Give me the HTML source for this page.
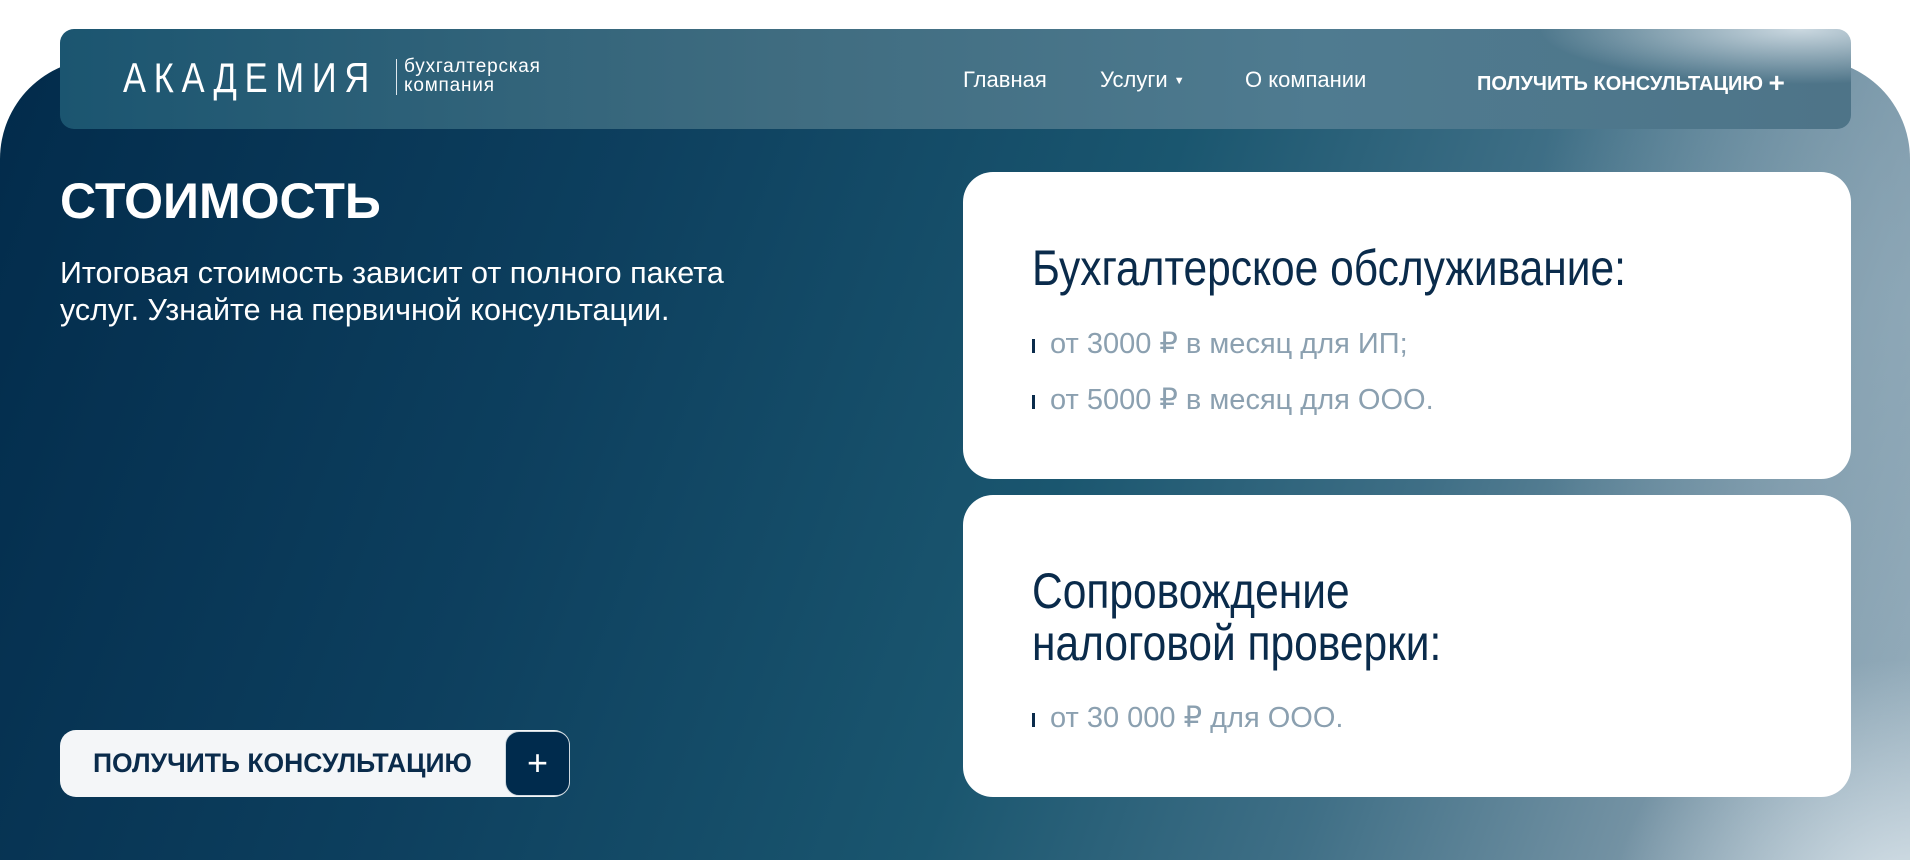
<!DOCTYPE html>
<html><head><meta charset="utf-8"><style>
*{margin:0;padding:0;box-sizing:border-box}
body{width:1910px;height:860px;overflow:hidden;background:#fff;font-family:"Liberation Sans","DejaVu Sans",sans-serif;position:relative}
.bg{position:absolute;left:0;top:59px;width:1910px;height:801px;border-radius:100px 100px 0 0;
background:
radial-gradient(ellipse 300px 260px at 1910px 860px,rgba(225,234,240,0.9),rgba(225,234,240,0) 100%),
radial-gradient(ellipse 380px 600px at 1910px 250px,rgba(150,175,190,0.6),rgba(150,175,190,0) 100%),
linear-gradient(110deg,#022b4b 0%,#0d3f5e 30%,#1a566f 55%,#3f6f86 72%,#7895a6 88%,#98afbd 100%);}
.hdr{position:absolute;left:60px;top:29px;width:1791px;height:100px;border-radius:14px;
background:radial-gradient(ellipse 260px 55px at 1740px 0,rgba(225,234,240,0.85),rgba(225,234,240,0) 100%),
linear-gradient(90deg,#1b5570 0%,#3f6c80 40%,#4f7b90 70%,#4e7488 100%);}
.logo{position:absolute;left:123px;top:54px;color:#fff;font-size:42px;letter-spacing:9.5px;font-weight:300;transform:scaleX(0.82);transform-origin:left}
.div{position:absolute;left:396px;top:59px;width:1px;height:36px;background:#dfe8ee}
.sub{position:absolute;left:404px;top:57px;color:#fff;font-size:19px;line-height:19px;letter-spacing:0.8px}
.nav{position:absolute;top:67px;color:#fff;font-size:22px}
.navb{position:absolute;top:67px;left:1477px;color:#fff;font-size:20px;font-weight:bold}
h1{position:absolute;left:60px;top:172px;color:#fff;font-size:50px;font-weight:bold}
.p{position:absolute;left:60px;top:255px;color:#fff;font-size:30.5px;line-height:37px;width:740px}
.card{position:absolute;left:963px;width:888px;background:#fff;border-radius:30px}
.ct{position:absolute;left:69px;color:#0a2b4b;font-family:"Liberation Sans Narrow","Liberation Sans",sans-serif;font-size:50px;line-height:52px;transform:scaleX(0.85);transform-origin:left}
.li{position:absolute;left:87px;color:#8ba0b0;font-size:29px;}
.li:before{content:"";position:absolute;left:-18px;top:13px;width:3px;height:14px;background:#0a2b4b}
.btn{position:absolute;left:60px;top:730px;width:510px;height:67px;background:#f4f6f8;border-radius:16px}
.btn span{position:absolute;left:33px;top:18px;color:#0a2b4b;font-size:26.5px;font-weight:bold}
.plus{position:absolute;right:0;top:1px;width:65px;height:65px;background:#002b4d;border:1px solid #cfd9e0;border-radius:14px;color:#fff;font-size:36px;text-align:center;line-height:62px}
</style></head><body>
<div class="bg"></div>
<div class="hdr"></div>
<div class="logo">АКАДЕМИЯ</div>
<div class="div"></div>
<div class="sub">бухгалтерская<br>компания</div>
<div class="nav" style="left:963px">Главная</div>
<div class="nav" style="left:1100px">Услуги <span style="font-size:11px;vertical-align:middle">▼</span></div>
<div class="nav" style="left:1245px">О компании</div>
<div class="navb">ПОЛУЧИТЬ КОНСУЛЬТАЦИЮ <span style="font-size:28px;vertical-align:-2px">+</span></div>
<h1>СТОИМОСТЬ</h1>
<div class="p">Итоговая стоимость зависит от полного пакета услуг. Узнайте на первичной консультации.</div>
<div class="card" style="top:172px;height:307px">
<div class="ct" style="top:70px">Бухгалтерское обслуживание:</div>
<div class="li" style="top:154px">от 3000 ₽ в месяц для ИП;</div>
<div class="li" style="top:210px">от 5000 ₽ в месяц для ООО.</div>
</div>
<div class="card" style="top:495px;height:302px">
<div class="ct" style="top:70px">Сопровождение<br>налоговой проверки:</div>
<div class="li" style="top:205px">от 30 000 ₽ для ООО.</div>
</div>
<div class="btn"><span>ПОЛУЧИТЬ КОНСУЛЬТАЦИЮ</span><div class="plus">+</div></div>
</body></html>
